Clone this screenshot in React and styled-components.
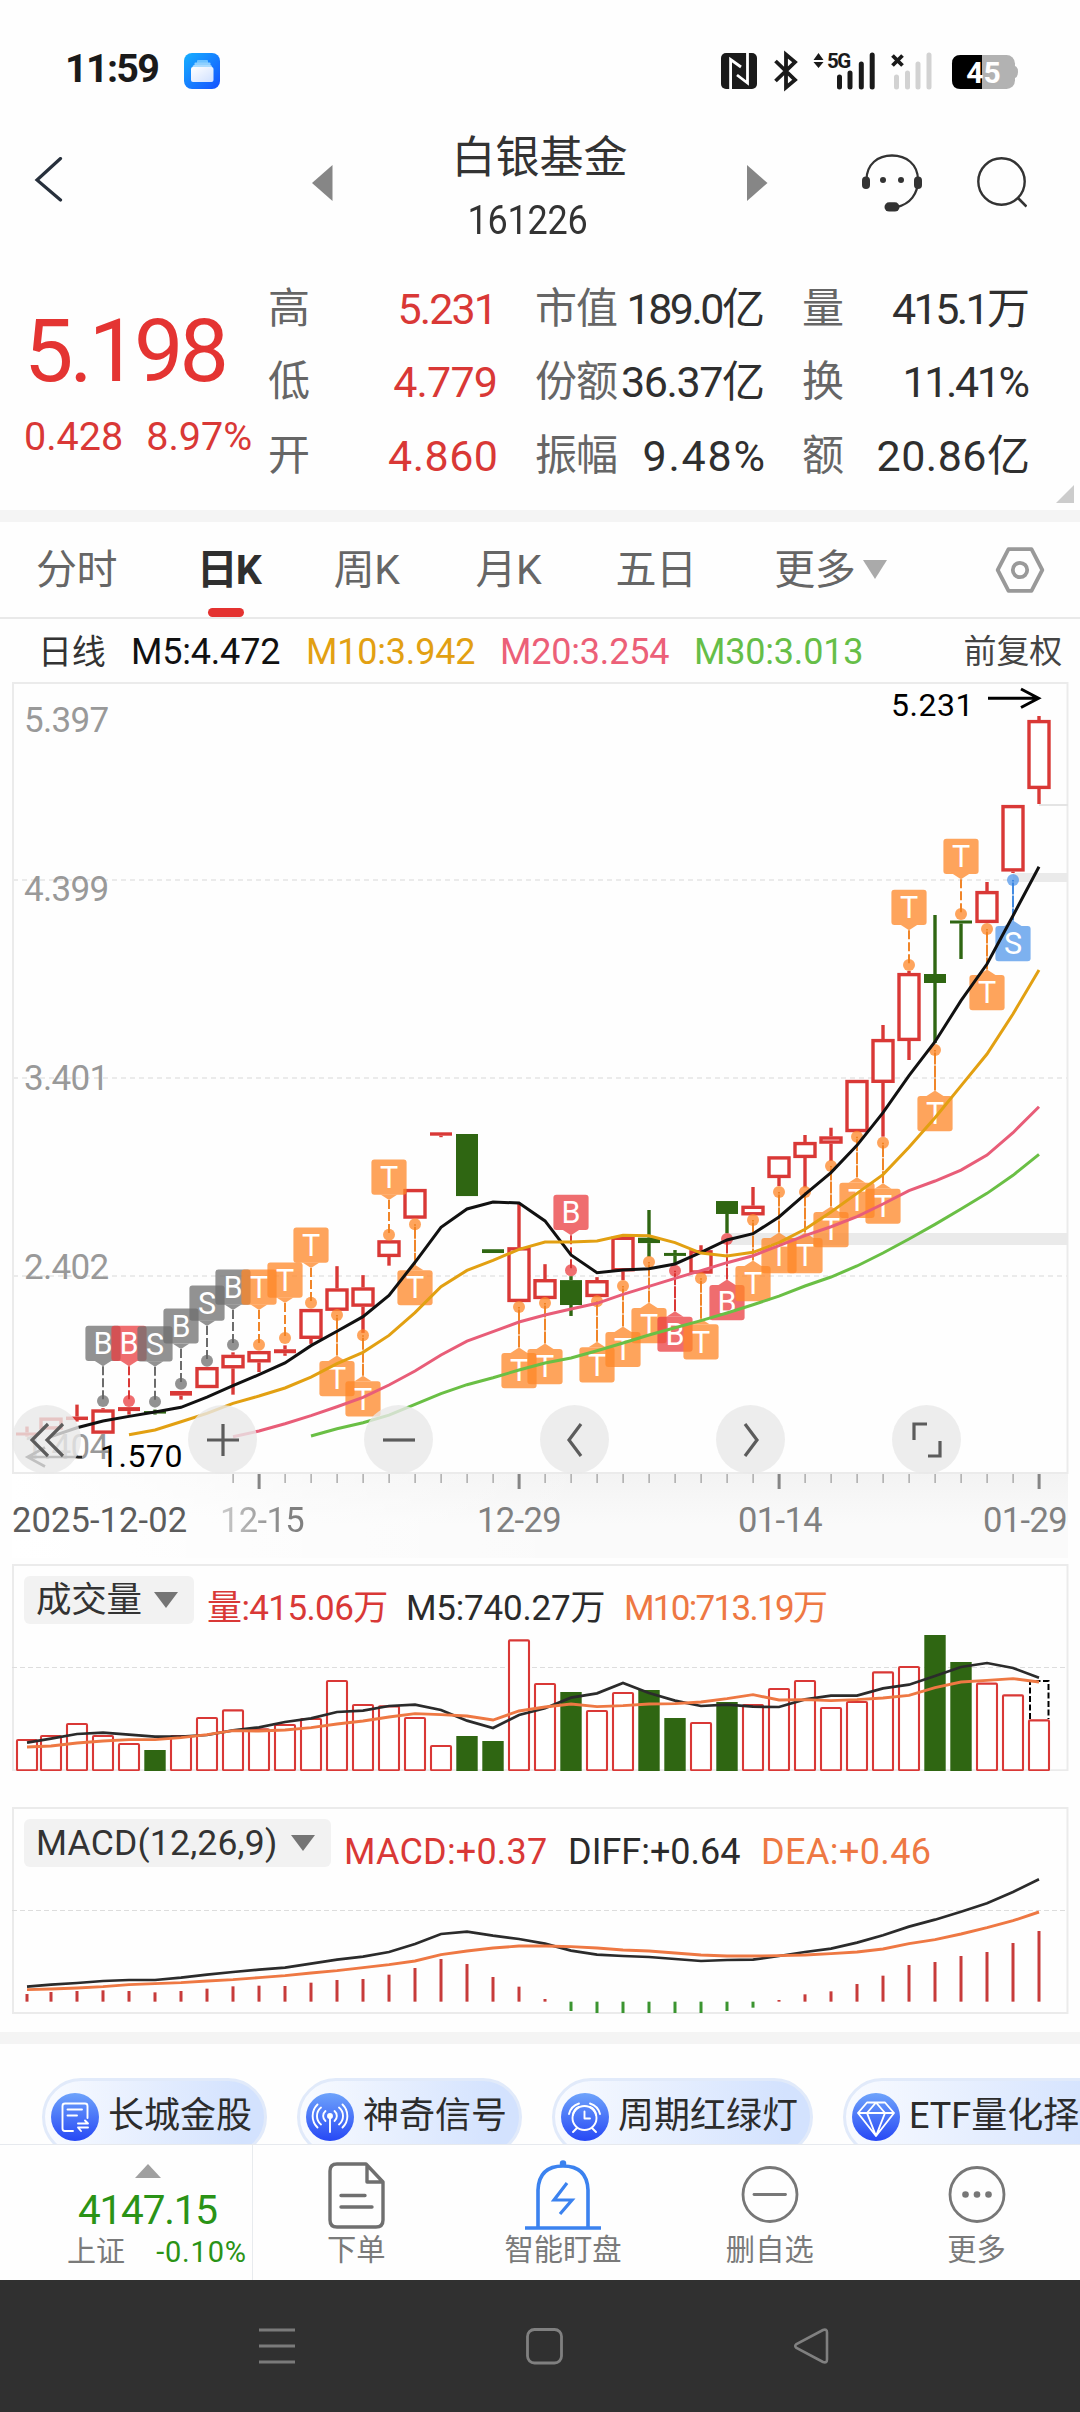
import React from 'react'
import styled, { createGlobalStyle, css } from 'styled-components'

const RED = '#d93836'
const GREEN = '#2f6612'
const BLACK = '#2b2b2b'
const ORANGE = '#ee7843'
const LINE = '#ebebeb'

const GlobalStyle = createGlobalStyle`
  body {
    margin: 0;
    background: #fff;
    font-family: Roboto, "Noto Sans CJK SC", sans-serif;
    color: #333;
  }
  * {
    box-sizing: border-box;
  }
  svg {
    display: block;
  }
`

const Screen = styled.div`
  width: 1080px;
  height: 2412px;
  overflow: hidden;
  display: flex;
  flex-direction: column;
  background: #fefefe;
`

const Divider = styled.div`
  height: 12px;
  flex: none;
  background: #f4f4f4;
`

/* ---------- status bar ---------- */

const StatusBar = styled.div`
  height: 110px;
  flex: none;
  display: flex;
  align-items: center;
  padding: 31px 61px 0 65px;
`

const Clock = styled.div`
  font-size: 39.5px;
  font-weight: 700;
  line-height: 40px;
  letter-spacing: -1.7px;
  width: 119px;
  margin-top: -3px;
  color: #1a1a1a;
`

const StatusIcons = styled.div`
  margin-left: auto;
`

/* ---------- title bar ---------- */

const TitleBar = styled.div`
  height: 140px;
  flex: none;
  display: flex;
  padding: 22px 53px 0 34px;
`

const Title = styled.div`
  width: 414px;
  text-align: center;
  color: #333;
`

const Name = styled.div`
  font-size: 44px;
  line-height: 52px;
  padding-right: 1px;
`

const Code = styled.div`
  font-size: 40.5px;
  line-height: 48px;
  padding-top: 12px;
  padding-right: 28px;
  letter-spacing: -0.3px;
  transform: scaleX(0.89);
`

const IconSlot = styled.div`
  width: ${p => p.$w}px;
  padding-top: ${p => p.$top}px;
`

/* ---------- quote ---------- */

const Quote = styled.div`
  height: 260px;
  flex: none;
  display: flex;
  padding: 22px 6px 0 24px;
`

const PriceBox = styled.div`
  width: 244px;
  padding-top: 29px;
  color: #e43432;
`

const Price = styled.div`
  font-size: 88px;
  line-height: 100px;
  letter-spacing: -4px;
`

const Change = styled.div`
  display: flex;
  gap: 23px;
  margin-top: 11px;
  font-size: 39.5px;
  line-height: 50px;
  color: ${RED};
  white-space: nowrap;
`

const Stats = styled.div`
  display: grid;
  grid-template-columns: 230px 230px 228px;
  grid-auto-rows: 73.6px;
  column-gap: 37px;
`

const Stat = styled.div`
  display: flex;
  align-items: center;
  justify-content: space-between;
  font-size: 43px;
  line-height: 50px;
  white-space: nowrap;
`

const StatLabel = styled.span`
  font-size: 42px;
  color: #666;
  letter-spacing: -1px;
`

const StatValue = styled.span`
  color: ${p => (p.$up ? RED : '#2f2f2f')};
  letter-spacing: ${p => p.$ls}px;
  margin-right: ${p => -p.$ls}px;
`

const Corner = styled.div`
  align-self: flex-end;
  margin-left: auto;
  margin-bottom: 7px;
  border-left: 18px solid transparent;
  border-bottom: 18px solid #ccc;
`

/* ---------- tabs ---------- */

const Tabs = styled.div`
  height: 97px;
  flex: none;
  display: flex;
  padding: 0 35px 0 36px;
  border-bottom: 2px solid #e9e9e9;
`

const Tab = styled.div`
  width: ${p => p.$w}px;
  font-size: 41px;
  line-height: 96px;
  letter-spacing: -0.5px;
  color: #666;
  display: flex;
  gap: 8px;
  white-space: nowrap;
  ${p => p.$active && css`
    color: #2f2f2f;
    font-weight: 700;
    letter-spacing: -2px;
    position: relative;
    &::after {
      content: '';
      position: absolute;
      left: 11px;
      bottom: 0;
      width: 36px;
      height: 9px;
      border-radius: 5px;
      background: #e43230;
    }
  `}
`

const Triangle = styled.i`
  align-self: ${p => (p.$left ? 'flex-start' : 'center')};
  margin-left: ${p => p.$left || 0}px;
  border-left: ${p => p.$s}px solid transparent;
  border-right: ${p => p.$s}px solid transparent;
  border-${p => (p.$up ? 'bottom' : 'top')}: ${p => p.$h}px solid ${p => p.$c};
`

/* ---------- moving average legend ---------- */

const MaRow = styled.div`
  height: 63px;
  flex: none;
  display: flex;
  padding: 0 18px 0 38px;
  font-size: 36px;
  line-height: 66px;
  letter-spacing: -0.2px;
  white-space: nowrap;
`

const MaItem = styled.span`
  width: ${p => p.$w}px;
  color: ${p => p.$c};
  font-size: ${p => p.$size || 36}px;
  ${p => p.$last && css`margin-left: auto;`}
`

/* ---------- k-line chart ---------- */

const ChartBox = styled.div`
  height: 792px;
  flex: none;
  margin: 0 11px 0 12px;
  display: grid;
  > * {
    grid-area: 1 / 1;
  }
`

const Controls = styled.div`
  align-self: end;
  display: flex;
  gap: 107px;
`

const RoundButton = styled.button`
  width: 69px;
  height: 69px;
  padding: 0;
  border: 0;
  border-radius: 50%;
  background: rgba(232, 232, 232, 0.8);
  display: flex;
  align-items: center;
  justify-content: center;
`

const Axis = styled.div`
  height: 84px;
  flex: none;
  margin: 0 12px;
  background:
    linear-gradient(90deg, #fff, rgba(255, 255, 255, 0) 55%),
    linear-gradient(#f3f3f3, #fafafa 60%);
`

const AxisLabels = styled.div`
  display: flex;
  font-size: 34.5px;
  line-height: 40px;
  color: #808080;
  margin-top: 11px;
  white-space: nowrap;
`

const AxisLabel = styled.span`
  width: ${p => p.$w}px;
  letter-spacing: ${p => p.$ls || -0.6}px;
  ${p => p.$dark && css`color: #5c5c5c;`}
  ${p => p.$fade && css`
    background: linear-gradient(90deg, #ccc, #808080 70px);
    background-clip: text;
    color: transparent;
  `}
`

/* ---------- indicator panels ---------- */

const Panel = styled.div`
  height: 207px;
  flex: none;
  margin: ${p => p.$m};
  display: grid;
  > * {
    grid-area: 1 / 1;
  }
`

const PanelHead = styled.div`
  display: flex;
  align-self: start;
  padding: 12px 0 0 12px;
  white-space: nowrap;
`

const Picker = styled.div`
  width: ${p => p.$w}px;
  height: 48px;
  flex: none;
  border-radius: 6px;
  background: #f2f2f2;
  display: flex;
  align-items: center;
  justify-content: space-between;
  padding: 0 16px 0 12px;
  margin-right: 13px;
  font-size: 35.5px;
  line-height: 46px;
  letter-spacing: ${p => p.$ls || 0}px;
`

const PanelItem = styled.span`
  width: ${p => p.$w}px;
  padding-top: 10px;
  font-size: ${p => p.$size || 35}px;
  line-height: 46px;
  letter-spacing: ${p => p.$ls}px;
  color: ${p => p.$c};
`

/* ---------- strategy chips ---------- */

const Chips = styled.div`
  height: 100px;
  flex: none;
  display: flex;
  gap: 30px;
  padding: 34px 0 0 42px;
  overflow: hidden;
`

const Chip = styled.div`
  height: 78px;
  flex: none;
  display: flex;
  align-items: center;
  gap: 9px;
  padding: 0 12px 0 6px;
  border: 3px solid #e1eafa;
  border-radius: 39px;
  background: linear-gradient(90deg, #f9fbff, #d3e2fe 90%);
  font-size: 36px;
  color: #2c2c2c;
  white-space: nowrap;
`

const ChipText = styled.span`
  line-height: 40px;
  padding-bottom: 3px;
`

const ChipIcon = styled.div`
  width: 48px;
  height: 48px;
  border-radius: 50%;
  background: linear-gradient(#6ea3fb, #2748f5);
`

/* ---------- bottom bars ---------- */

const BottomBar = styled.div`
  height: 136px;
  flex: none;
  display: flex;
  border-top: 1px solid #e6e9ee;
  background: #fefefe;
`

const IndexBox = styled.div`
  width: 253px;
  border-right: 1px solid #e8ebee;
  display: flex;
  flex-direction: column;
  padding: 19px 0 0 67px;
  color: #2a9316;
`

const IndexValue = styled.div`
  font-size: 40.5px;
  line-height: 44px;
  margin-top: 10px;
  padding-left: 11px;
  letter-spacing: -1.2px;
`

const IndexRow = styled.div`
  display: flex;
  justify-content: space-between;
  padding-right: 5px;
  font-size: 29px;
  line-height: 40px;
  letter-spacing: 0.8px;
  white-space: nowrap;
`

const Muted = styled.span`
  color: #7a7a7a;
  letter-spacing: 0;
`

const NavItem = styled.div`
  width: 207px;
  display: flex;
  flex-direction: column;
  align-items: center;
  padding-top: 13px;
  font-size: 29.3px;
  line-height: 40px;
  color: #7a7a7a;
`

const SystemNav = styled.div`
  height: 132px;
  flex: none;
  display: flex;
  align-items: center;
  padding: 0 251px 0 259px;
  justify-content: space-between;
  background: #303030;
`

/* ---------- data ---------- */

// [up, body top, body bottom, wick top, wick bottom]
const candles = [
  [1, 1434, 1437, 1428, 1438], [1, 1419, 1431, 1419, 1431], [1, 1418, 1421.5, 1406, 1423],
  [1, 1410.8, 1435.2, 1409.5, 1435.2], [1, 1408.5, 1412.5, 1408.5, 1416], [0, 1412.5, 1415, 1411, 1416],
  [1, 1392.3, 1397, 1392.3, 1401], [1, 1368.3, 1389.4, 1368.3, 1389.4], [1, 1356, 1369.6, 1353.5, 1396],
  [1, 1352.2, 1363.6, 1352.2, 1373.3], [1, 1350.4, 1354.4, 1346.5, 1357], [1, 1310, 1340, 1310, 1345],
  [1, 1289.3, 1311.8, 1267, 1311.8], [1, 1288.3, 1307.7, 1276, 1334], [1, 1241, 1257.8, 1241, 1266.5],
  [1, 1189.5, 1219.3, 1189.5, 1219.3], [1, 1132.6, 1136, 1132.6, 1137.5], [0, 1134.3, 1196.6, 1134.3, 1196.6],
  [0, 1250, 1253.8, 1250, 1253.8], [1, 1248, 1303, 1204, 1303], [1, 1280, 1300, 1265, 1300],
  [0, 1281, 1306, 1277, 1317], [1, 1281, 1298, 1278, 1298], [1, 1237.4, 1272.2, 1237.4, 1281],
  [0, 1238.4, 1243.8, 1210.6, 1257.5], [0, 1253.7, 1256.7, 1250.8, 1265], [1, 1251, 1274.5, 1246, 1274.5],
  [0, 1201.6, 1214.6, 1201.6, 1234], [1, 1206.3, 1216, 1187.5, 1216], [1, 1156.7, 1178.5, 1156.7, 1186.5],
  [1, 1142.3, 1158.4, 1135.3, 1188], [1, 1136.7, 1144, 1128, 1161.5], [1, 1080, 1132.4, 1080, 1132.4],
  [1, 1039, 1083, 1025, 1137], [1, 973, 1041, 971, 1060], [0, 974, 983, 915, 1043],
  [0, 920.5, 923.5, 920.5, 959], [1, 891, 923, 882, 923], [1, 805, 871.5, 805, 873], [1, 720, 789, 716, 804],
]

// [index, letter, colour, dot y, label above the candle]
const marks = [
  [3, 'B', 'grey', 1402.4, 1], [4, 'B', 'red', 1402.4, 1], [5, 'S', 'grey', 1403, 1], [6, 'B', 'grey', 1385, 1],
  [7, 'S', 'grey', 1362, 1], [8, 'B', 'grey', 1346, 1], [9, 'T', 'orange', 1346, 1], [10, 'T', 'orange', 1339, 1],
  [11, 'T', 'orange', 1303.8, 1], [12, 'T', 'orange', 1316, 0], [13, 'T', 'orange', 1336.4, 0],
  [14, 'T', 'orange', 1235.5, 1], [15, 'T', 'orange', 1224.8, 0], [19, 'T', 'orange', 1308, 0],
  [20, 'T', 'orange', 1304, 0], [21, 'B', 'red', 1271, 1], [22, 'T', 'orange', 1302.3, 0],
  [23, 'T', 'orange', 1286.8, 0], [24, 'T', 'orange', 1262.8, 0], [25, 'B', 'red', 1271.5, 0],
  [26, 'T', 'orange', 1279.2, 0], [27, 'B', 'red', 1239.8, 0], [28, 'T', 'orange', 1220.7, 0],
  [29, 'T', 'orange', 1192.5, 0], [30, 'T', 'orange', 1192.5, 0], [31, 'T', 'orange', 1166.4, 0],
  [32, 'T', 'orange', 1137, 0], [33, 'T', 'orange', 1143, 0], [34, 'T', 'orange', 965, 1],
  [35, 'T', 'orange', 1050, 0], [36, 'T', 'orange', 914, 1], [37, 'T', 'orange', 929, 0], [38, 'S', 'blue', 880, 0],
]

const markColours = {
  grey: ['#6f6f6f', '#666'],
  red: ['#eb3d40', '#d9302e'],
  orange: ['#ff8727', '#f08020'],
  blue: ['#5298eb', '#3b86e0'],
}

const averages = [
  { from: 1, colour: '#111', values: [1438.2, 1429.2, 1422.5, 1417.8, 1413.4, 1408.7, 1398.4, 1387, 1375.9, 1364.2, 1346.8, 1332.4, 1317.7, 1296.3, 1263.1, 1228, 1209.6, 1202.6, 1203.6, 1221.6, 1255.8, 1273.5, 1270.8, 1269.5, 1264.8, 1253.1, 1240.7, 1234.4, 1217.6, 1194.9, 1173.1, 1145.7, 1112.9, 1075.7, 1041.7, 1000.7, 964, 915.7, 866.7] },
  { from: 4, colour: '#e2a012', values: [1436.2, 1431.5, 1423.2, 1414.8, 1404.7, 1397.4, 1389.3, 1378.3, 1364.9, 1353.5, 1336.5, 1313.7, 1287.6, 1271.2, 1261.2, 1250.1, 1242.7, 1242.7, 1241.7, 1236, 1236.4, 1243.4, 1253.8, 1256.8, 1253.1, 1243.4, 1230, 1212.6, 1193.9, 1175.1, 1147.7, 1118, 1086, 1054, 1014, 970] },
  { from: 8, colour: '#e85d78', values: [1438.2, 1432.5, 1425.2, 1417.1, 1408.1, 1398.7, 1386.3, 1372.3, 1356.2, 1342.2, 1332.8, 1323.1, 1316.1, 1310, 1304.3, 1295.3, 1287.3, 1279.2, 1271.5, 1263.5, 1256.5, 1246.4, 1236.4, 1227.4, 1217.3, 1204.6, 1191.2, 1181.5, 1170.5, 1155.4, 1133, 1107] },
  { from: 11, colour: '#6abf45', values: [1437.5, 1430.2, 1424.2, 1416.5, 1405.8, 1395, 1386, 1379, 1371.3, 1364.2, 1359.2, 1351.9, 1344.2, 1336.1, 1328.8, 1321.7, 1314, 1305.7, 1297, 1286.9, 1277.9, 1266.8, 1253.8, 1239.7, 1225, 1209.6, 1193.9, 1175.8, 1154.7] },
]

// bar tops in thirds of a pixel, base line at 661
const volumes = [567, 555, 519, 555, 579, 600, 555, 501, 478, 535, 522, 504, 390, 462, 466, 501, 585, 558, 573, 268, 399, 426, 480, 426, 420, 504, 516, 456, 462, 414, 390, 471, 453, 364, 348, 255, 336, 398, 433, 508]
const fallingDays = [5, 17, 18, 21, 24, 25, 27, 35, 36]
const volumeM5 = [578, 566, 552, 548, 554, 560, 560, 555, 541, 532, 516, 505, 486, 482, 468, 464, 480, 512, 534, 495, 475, 443, 430, 399, 429, 452, 468, 464, 470, 471, 448, 437, 437, 415, 404, 378, 351, 339, 354, 383]
const volumeM10 = [591, 588, 579, 573, 569, 569, 563, 554, 542, 543, 540, 533, 522, 513, 501, 491, 494, 498, 510, 483, 471, 462, 470, 467, 462, 461, 456, 446, 434, 450, 449, 452, 449, 444, 436, 413, 396, 391, 386, 396]

// same units, zero line at 1354
const macd = [1332, 1326, 1323, 1321, 1323, 1327, 1323, 1316, 1309, 1307, 1308, 1298, 1290, 1287, 1274, 1254, 1227, 1242, 1281, 1310, 1347, 1383, 1389, 1389, 1389, 1389, 1389, 1383, 1373, 1350, 1333, 1324, 1302, 1277, 1245, 1236, 1218, 1206, 1179, 1143]
const diff = [1310, 1304, 1299, 1293, 1290, 1290, 1283, 1274, 1266, 1259, 1253, 1241, 1229, 1220, 1206, 1182, 1152, 1145, 1157, 1167, 1181, 1202, 1214, 1218, 1221, 1227, 1233, 1230, 1229, 1218, 1206, 1196, 1178, 1156, 1130, 1109, 1085, 1060, 1026, 988]
const dea = [1319, 1317, 1314, 1310, 1304, 1301, 1298, 1293, 1289, 1283, 1277, 1269, 1262, 1253, 1244, 1233, 1214, 1203, 1194, 1188, 1188, 1190, 1194, 1200, 1203, 1209, 1215, 1218, 1218, 1217, 1215, 1211, 1206, 1197, 1181, 1169, 1152, 1133, 1112, 1086]

const xAt = i => (i === 0 ? 27 : 25 + i * 26)
// prices below the middle of the chart are drawn slightly compressed
const priceY = y => y - Math.max(0, y - 1060) * 0.004
const third = v => 1550 + v / 3
const points = (values, from, scale) =>
  values.map((v, i) => `${xAt(i + from)},${scale(v)}`).join(' ')

// [label, value, rising, letter spacing]
const stats = [
  ['高', '5.231', 1, -1.9], ['市值', '189.0亿', 0, -2.5], ['量', '415.1万', 0, -2.6],
  ['低', '4.779', 1, -0.8], ['份额', '36.37亿', 0, -1.4], ['换', '11.41%', 0, -2.4],
  ['开', '4.860', 1, 0.5], ['振幅', '9.48%', 0, 1.8], ['额', '20.86亿', 0, 0.5],
]

/* ---------- chart parts ---------- */

const Candle = ({ i, data }) => {
  const [top, bottom, high, low] = data.slice(1).map(priceY)
  const up = data[0]
  const x = xAt(i)
  const colour = up ? RED : GREEN
  const hollow = up && bottom - top > 6
  return (
    <g stroke={colour} strokeWidth="3.4">
      {high < top && <line x1={x} x2={x} y1={high} y2={top} />}
      {low > bottom && <line x1={x} x2={x} y1={bottom} y2={low} />}
      {hollow ? (
        <rect x={x - 10} y={top + 1.6} width="20" height={bottom - top - 3.2} fill="#fff" />
      ) : (
        <rect x={x - 11} y={top} width="22" height={bottom - top} fill={colour} stroke="none" />
      )}
    </g>
  )
}

const Mark = ({ i, letter, colour, y, above }) => {
  const x = xAt(i)
  const top = above ? y - 75.3 : y + 46
  const edge = above ? top + 35 : top
  const tip = above ? edge + 5.5 : edge - 5.5
  const [fill, stroke] = markColours[colour]
  return (
    <g>
      <g fill={fill} opacity="0.75">
        <circle cx={x} cy={y} r="6" />
        <rect x={x - 17.6} y={top} width="35.2" height="35.2" rx="3" />
        <path d={`M${x - 8.5} ${edge}H${x + 8.5}L${x} ${tip}Z`} />
      </g>
      <line x1={x} x2={x} y1={tip} y2={y} stroke={stroke} strokeWidth="1.9" strokeDasharray={above ? '9 3' : '12 1'} />
      <text x={x} y={top + 28.3} textAnchor="middle" fontSize="30.5" fill="#fff">{letter}</text>
    </g>
  )
}

const KLine = () => (
  <svg width="1057" height="792" viewBox="12 682 1057 792" fontFamily="Roboto, sans-serif">
    <path d="M13 683H1067.5V1473H13Z" fill="none" stroke={LINE} strokeWidth="2" />
    {[880, 1078, 1276].map(y => (
      <line key={y} x1="13" x2="1068" y1={y} y2={y} stroke={LINE} strokeWidth="2" strokeDasharray="5 4" />
    ))}
    <rect x="727" y="1233" width="341" height="12" fill="#eaeaea" />
    <rect x="1013" y="873" width="55" height="9" fill="#eaeaea" />
    <rect x="1039" y="804" width="29" height="2" fill="#e4e4e4" />
    <g fontSize="35" fill="#999" letterSpacing="-0.7">
      <text x="24" y="732">5.397</text>
      <text x="24" y="901">4.399</text>
      <text x="24" y="1090">3.401</text>
      <text x="24" y="1279">2.402</text>
      <text x="24" y="1458.5">1.404</text>
    </g>
    {candles.map((c, i) => <Candle key={i} i={i} data={c} />)}
    {marks.map(([i, letter, colour, y, above]) => (
      <Mark key={i} i={i} letter={letter} colour={colour} y={priceY(y)} above={above} />
    ))}
    {averages.map(a => (
      <polyline key={a.colour} points={points(a.values, a.from, priceY)} fill="none" stroke={a.colour} strokeWidth="3" />
    ))}
    <g fontSize="32" fill="#000" letterSpacing="0.5">
      <text x="891" y="715.5">5.231</text>
      <text x="100" y="1466.7">1.570</text>
    </g>
    <path d="M988 698.3H1038M1021 689L1038.5 698.3L1021 707.5" fill="none" stroke="#000" strokeWidth="3" />
    <path d="M82 1457H28M45 1447.5L27.5 1457L45 1466.5" fill="none" stroke="#222" strokeWidth="2.6" />
  </svg>
)

const Ticks = () => (
  <svg width="1056" height="15" viewBox="12 1474 1056 15">
    {Array.from({ length: 32 }, (_, k) => k + 8).map(i => {
      const major = i % 10 === 9
      return (
        <rect
          key={i}
          x={xAt(i) - (major ? 1.4 : 0.5)}
          y="1474"
          width={major ? 3 : 1.2}
          height={major ? 15 : 9}
          fill={major ? '#858585' : '#999'}
        />
      )
    })}
  </svg>
)

const VolumeChart = () => (
  <svg width="1057" height="207" viewBox="12 1564 1057 207">
    <path d="M12 1565H1068M13 1564V1771M1067.5 1564V1771M12 1770.3H1068" fill="none" stroke={LINE} strokeWidth="2" />
    <line x1="12" x2="1068" y1="1667.5" y2="1667.5" stroke="#ddd" strokeDasharray="5 3" />
    {volumes.map((v, i) => {
      const y = third(v)
      return fallingDays.includes(i) ? (
        <rect key={i} x={xAt(i) - 10.7} y={y} width="21.4" height={1771 - y} fill={GREEN} />
      ) : (
        <rect key={i} x={xAt(i) - 10} y={y + 1} width="20" height={1769.2 - y} rx="1" fill="#fff" stroke={RED} strokeWidth="2.1" />
      )
    })}
    <path d="M1030 1719V1681H1048.5V1719" fill="none" stroke="#000" strokeWidth="2" strokeDasharray="6 2.5" />
    <polyline points={points(volumeM5, 0, third)} fill="none" stroke={BLACK} strokeWidth="2.7" />
    <polyline points={points(volumeM10, 0, third)} fill="none" stroke={ORANGE} strokeWidth="2.9" />
  </svg>
)

const MacdChart = () => (
  <svg width="1057" height="207" viewBox="12 1807 1057 207">
    <rect x="13" y="1808" width="1054.5" height="205" fill="none" stroke={LINE} strokeWidth="2" />
    <line x1="12" x2="1068" y1="1910.5" y2="1910.5" stroke="#ddd" strokeDasharray="5 3" />
    {macd.map((v, i) => (
      <line key={i} x1={xAt(i)} x2={xAt(i)} y1={third(1355)} y2={third(v)} stroke={v > 1355 ? '#3b9430' : '#c73b3a'} strokeWidth="3" />
    ))}
    <polyline points={points(diff, 0, third)} fill="none" stroke={BLACK} strokeWidth="2.7" />
    <polyline points={points(dea, 0, third)} fill="none" stroke={ORANGE} strokeWidth="2.9" />
  </svg>
)

/* ---------- icons ---------- */

const AppIcon = () => (
  <svg width="36" height="36" viewBox="0 0 36 36">
    <defs>
      <linearGradient id="app" x1="0" y1="0" x2="1" y2="1">
        <stop offset="0" stopColor="#16b0ff" />
        <stop offset="1" stopColor="#1550ff" />
      </linearGradient>
      <linearGradient id="card" x1="0" y1="0" x2="1" y2="1">
        <stop offset="0" stopColor="#fff" />
        <stop offset="1" stopColor="#cfe0ff" />
      </linearGradient>
    </defs>
    <rect width="36" height="36" rx="8" fill="url(#app)" />
    <rect x="13" y="7" width="11" height="4" rx="1" fill="#6fc3ff" />
    <rect x="10.5" y="9.5" width="16" height="5" rx="1" fill="#8ed0ff" />
    <rect x="8.5" y="12" width="19.5" height="5" rx="2" fill="#a9dbff" />
    <rect x="7" y="14" width="22.5" height="15" rx="2" fill="url(#card)" />
  </svg>
)

const Status = () => (
  <svg width="298" height="50" viewBox="721 45 298 50">
    <rect x="721" y="52" width="36" height="36" rx="5" fill="#1a1a1a" />
    <path d="M730.6 88V58.5L741 66M747.5 52V82L737 74" fill="none" stroke="#fff" strokeWidth="2.8" />
    <path d="M775.5 60L795 79L786 86.5V53.5L795 61L775.5 80" fill="none" stroke="#1a1a1a" strokeWidth="3.8" />
    <path d="M813.5 59L818.5 52L823.5 59ZM813.5 61L818.5 67L823.5 61Z" fill="#1a1a1a" />
    <text x="827" y="66.5" fontFamily="Roboto" fontWeight="700" fontSize="20.5" letterSpacing="-1.5" fill="#1a1a1a">5G</text>
    <path d="M839.5 76V86M850 72V86M861.3 63V86M872.2 54V86" stroke="#1a1a1a" strokeWidth="5" strokeLinecap="round" />
    <path d="M892.5 54.5L902.5 64.5M902.5 54.5L892.5 64.5" stroke="#1a1a1a" strokeWidth="3.8" />
    <path d="M896.5 76V86M907.5 72V86M918 63V86M929 54V86" stroke="#d2d2d2" strokeWidth="5" strokeLinecap="round" />
    <rect x="952" y="54" width="63" height="34" rx="8.5" fill="#b2b2b2" />
    <path d="M1015 65Q1018 66 1018 71Q1018 76 1015 77Z" fill="#b2b2b2" />
    <path d="M982 54H960.5Q952 54 952 62.5V79.5Q952 88 960.5 88H982Z" fill="#000" />
    <text x="983.5" y="82" textAnchor="middle" fontFamily="Roboto" fontWeight="700" fontSize="30" fill="#fff">45</text>
  </svg>
)

const BackIcon = () => (
  <svg width="30" height="46" viewBox="34 157 30 46">
    <path d="M60.5 158.5L37 180L60.5 200" fill="none" stroke="#27303c" strokeWidth="3.2" strokeLinecap="round" />
  </svg>
)

const Arrow = ({ flip }) => (
  <svg width="21" height="36" viewBox="0 0 21 36">
    <path d={flip ? 'M0 0L20.5 18L0 36Z' : 'M20.5 0L0 18L20.5 36Z'} fill="#868686" />
  </svg>
)

const Headset = () => (
  <svg width="62" height="60" viewBox="861 153 62 60">
    <path d="M866.5 180C866.5 164 878 155.5 892 155.5S918 164 918 180C918 194 910 204 897 207" fill="none" stroke="#333" strokeWidth="2.3" />
    <rect x="862" y="176.5" width="8" height="12.5" rx="4" fill="#333" />
    <rect x="914" y="176.5" width="8" height="12.5" rx="4" fill="#333" />
    <rect x="884.5" y="202.3" width="15" height="9.2" rx="4.6" fill="#333" />
    <circle cx="883" cy="180" r="3" fill="#333" />
    <circle cx="901" cy="180" r="3" fill="#333" />
  </svg>
)

const Search = () => (
  <svg width="50" height="52" viewBox="977 157 50 52">
    <circle cx="1001.5" cy="181.5" r="23.2" fill="none" stroke="#333" strokeWidth="2.4" />
    <path d="M1017.5 197.5L1026.5 206.5" stroke="#333" strokeWidth="2.6" />
  </svg>
)

const HexIcon = () => (
  <svg width="50" height="46" viewBox="0 0 50 46">
    <path d="M13.5 2.2H36.5L47.3 23L36.5 43.8H13.5L2.7 23Z" fill="none" stroke="#999" strokeWidth="3.8" strokeLinejoin="round" />
    <circle cx="25" cy="23" r="7.2" fill="none" stroke="#999" strokeWidth="3.8" />
  </svg>
)

const glyphs = {
  first: 'M18 -16L2 0L18 16M33 -16L17 0L33 16',
  plus: 'M1 0H33M17 -16V16',
  minus: 'M1 0H33',
  left: 'M23 -16L11 0L23 16',
  right: 'M11 -16L23 0L11 16',
  full: 'M4 0V-16H17M18 16H30V1',
}

const Glyph = ({ name }) => (
  <svg width="36" height="40" viewBox="-1 -20 36 40">
    <path d={glyphs[name]} fill="none" stroke="#5c5c5c" strokeWidth="3.2" />
  </svg>
)

const chipDrawings = {
  gold: (
    <>
      <path d="M22 38H14Q11.5 38 11.5 35.5V13Q11.5 10.5 14 10.5H34Q36.5 10.5 36.5 13V25" />
      <path d="M16.5 16.5H31M16.5 22.5H26M37 30.5H27M34 27.5L37 30.5M27 34.5H37M27 34.5L30 38" />
    </>
  ),
  signal: (
    <>
      <circle cx="24" cy="23" r="2" fill="#fff" />
      <path d="M24 23V39M19.5 28A6.5 6.5 0 0 1 19.5 18M28.5 28A6.5 6.5 0 0 0 28.5 18M15 31.5A11 11 0 0 1 15 14.5M33 31.5A11 11 0 0 0 33 14.5M11.5 34.5A16 16 0 0 1 11.5 11.5M36.5 34.5A16 16 0 0 0 36.5 11.5" />
    </>
  ),
  clock: (
    <>
      <circle cx="23.5" cy="25" r="12" />
      <path d="M23.5 18.5V25.5H29M16 35L12 39M31 35L35 39M8 21Q10 13 18 10.5M39 21Q37 13 29 10.5M12 22Q13 16 18 14M35 22Q34 16 29 14" />
    </>
  ),
  gem: <path d="M15 9.5H33L42 20L24 43L6 20ZM6 20H42M15 20L24 43L33 20L24 9.5L15 20" />,
}

const ChipGlyph = ({ name }) => (
  <svg width="48" height="48" viewBox="0 0 48 48" fill="none" stroke="#fff" strokeWidth="1.9" strokeLinejoin="round" strokeLinecap="round">
    {chipDrawings[name]}
  </svg>
)

const navDrawings = {
  order: (
    <g stroke="#6f6f6f" strokeWidth="3.4" strokeLinejoin="round" strokeLinecap="round">
      <path d="M48 6H19Q12 6 12 13V62Q12 69 19 69H58Q65 69 65 62V24ZM49 7V24H64" />
      <path d="M23 37.5H47M23 49H54" />
    </g>
  ),
  watch: (
    <g stroke="#3b82ef" strokeWidth="3.6">
      <path d="M0 70H76M13 69V32Q14 8 38 8Q62 8 63 32V69" />
      <path d="M42 25L29 42H47L35 56" strokeWidth="3.2" />
      <circle cx="38" cy="5.5" r="2.5" fill="#3b82ef" strokeWidth="1.5" />
    </g>
  ),
  remove: (
    <g stroke="#777" strokeWidth="2.8">
      <circle cx="38" cy="36.5" r="27" />
      <path d="M22 36.5H53.5" strokeLinecap="round" />
    </g>
  ),
  more: (
    <g stroke="#777" strokeWidth="2.8">
      <circle cx="38" cy="36.5" r="27" />
      <g fill="#777" stroke="none">
        <circle cx="26.5" cy="36.5" r="3.3" />
        <circle cx="38" cy="36.5" r="3.3" />
        <circle cx="49.5" cy="36.5" r="3.3" />
      </g>
    </g>
  ),
}

const NavGlyph = ({ name }) => (
  <svg width="76" height="72" viewBox="0 0 76 72" fill="none">
    {navDrawings[name]}
  </svg>
)

const chips = [
  ['gold', '长城金股'],
  ['signal', '神奇信号'],
  ['clock', '周期红绿灯'],
  ['gem', 'ETF量化择时'],
]

const App = () => (
  <Screen>
    <GlobalStyle />
    <StatusBar>
      <Clock>11:59</Clock>
      <AppIcon />
      <StatusIcons><Status /></StatusIcons>
    </StatusBar>

    <TitleBar>
      <IconSlot $w={278} $top={25}><BackIcon /></IconSlot>
      <IconSlot $w={21} $top={33}><Arrow /></IconSlot>
      <Title>
        <Name>白银基金</Name>
        <Code>161226</Code>
      </Title>
      <IconSlot $w={114} $top={33}><Arrow flip /></IconSlot>
      <IconSlot $w={116} $top={21}><Headset /></IconSlot>
      <IconSlot $w={50} $top={25}><Search /></IconSlot>
    </TitleBar>

    <Quote>
      <PriceBox>
        <Price>5.198</Price>
        <Change>
          <span>0.428</span>
          <span>8.97%</span>
        </Change>
      </PriceBox>
      <Stats>
        {stats.map(([label, value, up, ls]) => (
          <Stat key={label}>
            <StatLabel>{label}</StatLabel>
            <StatValue $up={up} $ls={ls}>{value}</StatValue>
          </Stat>
        ))}
      </Stats>
      <Corner />
    </Quote>
    <Divider />

    <Tabs>
      <Tab $w={161}>分时</Tab>
      <Tab $w={137} $active>日K</Tab>
      <Tab $w={142}>周K</Tab>
      <Tab $w={140}>月K</Tab>
      <Tab $w={159}>五日</Tab>
      <Tab $w={221}>更多<Triangle $s={12} $h={19} $c="#aaa" /></Tab>
      <IconSlot $w={50} $top={25}><HexIcon /></IconSlot>
    </Tabs>

    <MaRow>
      <MaItem $w={93} $size={34} $c="#333">日线</MaItem>
      <MaItem $w={175} $c="#111">M5:4.472</MaItem>
      <MaItem $w={194} $c="#e2a012">M10:3.942</MaItem>
      <MaItem $w={194} $c="#ec6078">M20:3.254</MaItem>
      <MaItem $w={180} $c="#66be48">M30:3.013</MaItem>
      <MaItem $size={33} $c="#444" $last>前复权</MaItem>
    </MaRow>

    <ChartBox>
      <KLine />
      <Controls>
        {Object.keys(glyphs).map(name => (
          <RoundButton key={name}><Glyph name={name} /></RoundButton>
        ))}
      </Controls>
    </ChartBox>
    <Axis>
      <Ticks />
      <AxisLabels>
        <AxisLabel $w={208} $ls={0.1} $dark>2025-12-02</AxisLabel>
        <AxisLabel $w={257} $fade>12-15</AxisLabel>
        <AxisLabel $w={261}>12-29</AxisLabel>
        <AxisLabel $w={245}>01-14</AxisLabel>
        <AxisLabel>01-29</AxisLabel>
      </AxisLabels>
    </Axis>

    <Panel $m="6px 11px 0 12px">
      <VolumeChart />
      <PanelHead>
        <Picker $w={170} $ls={-0.3}>成交量<Triangle $s={12} $h={16} $c="#757575" /></Picker>
        <PanelItem $w={199} $c={RED} $ls={-0.6}>量:415.06万</PanelItem>
        <PanelItem $w={218} $c={BLACK} $ls={-0.2}>M5:740.27万</PanelItem>
        <PanelItem $w={210} $c={ORANGE} $ls={-1.7}>M10:713.19万</PanelItem>
      </PanelHead>
    </Panel>
    <Panel $m="36px 11px 18px 12px">
      <MacdChart />
      <PanelHead>
        <Picker $w={307} $ls={0.2}>MACD(12,26,9)<Triangle $s={12} $h={16} $c="#757575" /></Picker>
        <PanelItem $w={224} $c={RED} $size={36} $ls={0.2}>MACD:+0.37</PanelItem>
        <PanelItem $w={193} $c={BLACK} $size={36} $ls={0}>DIFF:+0.64</PanelItem>
        <PanelItem $w={210} $c={ORANGE} $size={36} $ls={0.4}>DEA:+0.46</PanelItem>
      </PanelHead>
    </Panel>
    <Divider />

    <Chips>
      {chips.map(([icon, text]) => (
        <Chip key={icon}>
          <ChipIcon><ChipGlyph name={icon} /></ChipIcon>
          <ChipText>{text}</ChipText>
        </Chip>
      ))}
    </Chips>

    <BottomBar>
      <IndexBox>
        <Triangle $up $left={68} $s={13} $h={14} $c="#a0a0a0" />
        <IndexValue>4147.15</IndexValue>
        <IndexRow>
          <Muted>上证</Muted>
          <span>-0.10%</span>
        </IndexRow>
      </IndexBox>
      <NavItem><NavGlyph name="order" />下单</NavItem>
      <NavItem><NavGlyph name="watch" />智能盯盘</NavItem>
      <NavItem><NavGlyph name="remove" />删自选</NavItem>
      <NavItem><NavGlyph name="more" />更多</NavItem>
    </BottomBar>

    <SystemNav>
      <svg width="36" height="36" viewBox="0 0 36 36">
        <path d="M0 2H36M0 18H36M0 34H36" stroke="#7a7a7a" strokeWidth="3" />
      </svg>
      <svg width="37" height="37" viewBox="0 0 37 37">
        <rect x="1.5" y="1.5" width="34" height="33.5" rx="7" fill="none" stroke="#808080" strokeWidth="2.8" />
      </svg>
      <svg width="35" height="36" viewBox="0 0 35 36">
        <path d="M2.5 16Q0 18 2.5 20L29 34Q33 35.5 33 31.5V4.5Q33 0.5 29 2Z" fill="none" stroke="#808080" strokeWidth="2.6" />
      </svg>
    </SystemNav>
  </Screen>
)

export default App
